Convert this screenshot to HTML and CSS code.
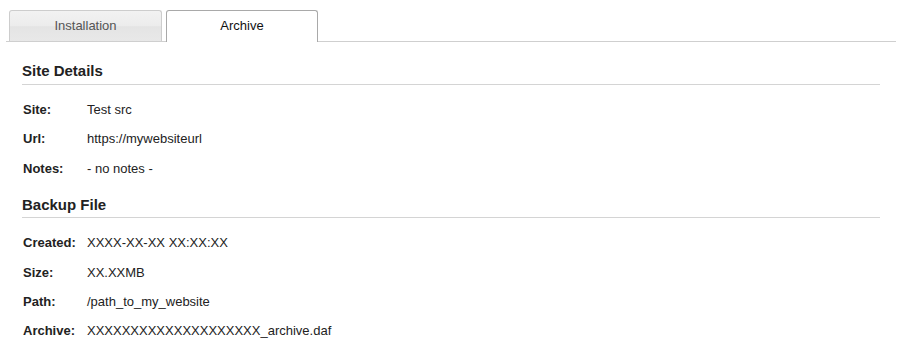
FILE: index.html
```html
<!DOCTYPE html>
<html>
<head>
<meta charset="utf-8">
<link rel="stylesheet" href="styles.css">
</head>
<body>
<div class="tabs">
  <div class="tab">Installation</div>
  <div class="tab active">Archive</div>
</div>
<div class="content">
  <h2 class="section-title">Site Details</h2>
  <div class="details">
    <div class="label">Site:</div><div class="value">Test src</div>
    <div class="label">Url:</div><div class="value">https://mywebsiteurl</div>
    <div class="label">Notes:</div><div class="value">- no notes -</div>
  </div>
  <h2 class="section-title second">Backup File</h2>
  <div class="details">
    <div class="label">Created:</div><div class="value">XXXX-XX-XX XX:XX:XX</div>
    <div class="label">Size:</div><div class="value">XX.XXMB</div>
    <div class="label">Path:</div><div class="value">/path_to_my_website</div>
    <div class="label">Archive:</div><div class="value">XXXXXXXXXXXXXXXXXXXX_archive.daf</div>
  </div>
</div>
</body>
</html>
```
FILE: styles.css
```css
html, body {
  margin: 0;
  padding: 0;
  background: #fff;
}
body {
  font-family: "Liberation Sans", Arial, sans-serif;
  font-size: 13px;
  color: #222;
}
.tabs {
  display: flex;
  gap: 4px;
  margin: 10px 8px 0 6px;
  padding-left: 3px;
  border-bottom: 1px solid #cfcfcf;
  height: 31px;
}
.tab {
  box-sizing: border-box;
  width: 153px;
  height: 31px;
  border: 1px solid #cdcdcd;
  border-bottom: none;
  border-radius: 3px 3px 0 0;
  background: linear-gradient(to bottom, #f2f2f2 0%, #ececec 50%, #e4e4e4 52%, #e8e8e8 100%);
  color: #555;
  display: flex;
  align-items: center;
  justify-content: center;
  line-height: 1;
  padding-bottom: 2px;
}
.tab.active {
  width: 152px;
  height: 32px;
  background: #fff;
  border-color: #a9a9a9;
  color: #111;
  padding-bottom: 3px;
}
.content {
  padding: 0 24px 0 22px;
}
.section-title {
  margin: 20px 0 0 0;
  font-size: 15px;
  line-height: 18px;
  font-weight: bold;
  color: #222;
  padding-bottom: 4px;
  border-bottom: 1px solid #d4d4d4;
}
.section-title.second {
  margin-top: 13px;
  padding-bottom: 3px;
}
.details {
  display: grid;
  grid-template-columns: 65px 1fr;
  margin-top: 10px;
  line-height: 29.4px;
}
.label {
  font-weight: bold;
  padding-left: 1px;
}
.value {
  white-space: nowrap;
}
```
